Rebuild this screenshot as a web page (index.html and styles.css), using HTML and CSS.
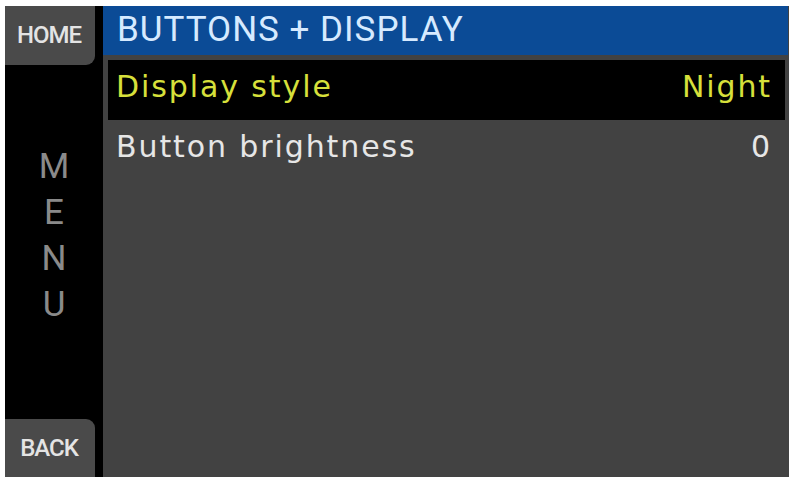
FILE: index.html
```html
<!DOCTYPE html>
<html>
<head>
<meta charset="utf-8">
<link rel="stylesheet" href="styles.css">
</head>
<body>
<div class="screen">
  <aside class="sidebar">
    <div class="tab tab-home">HOME</div>
    <div class="menu-label">
      <span>M</span><span>E</span><span>N</span><span>U</span>
    </div>
    <div class="tab tab-back">BACK</div>
  </aside>
  <main class="main">
    <header class="title">BUTTONS + DISPLAY</header>
    <div class="list">
      <div class="row selected"><span class="label">Display style</span><span class="value">Night</span></div>
      <div class="row"><span class="label">Button brightness</span><span class="value">0</span></div>
    </div>
  </main>
</div>
</body>
</html>
```

FILE: styles.css
```css
html, body {
  margin: 0;
  padding: 0;
  background: #ffffff;
}
body {
  padding: 6px 1px 1px 5px;
  font-family: Roboto, "DejaVu Sans", sans-serif;
}
.screen {
  display: flex;
  width: 784px;
  height: 471px;
  background: #000;
}
.sidebar {
  width: 98px;
  display: flex;
  flex-direction: column;
  background: #000;
}
.tab {
  width: 90px;
  background: #4a4a4a;
  color: #e4e4e4;
  font-size: 24px;
  font-weight: 500;
  letter-spacing: -1px;
  display: flex;
  align-items: center;
  justify-content: center;
  box-sizing: border-box;
  padding-right: 2px;
}
.tab-home {
  height: 59px;
  border-bottom-right-radius: 9px;
  padding-bottom: 2px;
}
.tab-back {
  height: 58px;
  border-top-right-radius: 9px;
}
.menu-label {
  flex: 1;
  display: flex;
  flex-direction: column;
  align-items: center;
  justify-content: center;
  color: #8a8a8a;
  font-size: 35px;
  font-weight: 400;
  line-height: 46px;
  padding-bottom: 12px;
  box-sizing: border-box;
}
.main {
  flex: 1;
  background: #424242;
  display: flex;
  flex-direction: column;
}
.title {
  height: 49px;
  background: #0b4b96;
  color: #d6eaff;
  font-size: 35px;
  line-height: 48px;
  padding-left: 14px;
  margin-right: 1px;
  letter-spacing: 1px;
}
.list {
  padding: 5px 4px 0 5px;
  display: flex;
  flex-direction: column;
}
.row {
  height: 60px;
  display: flex;
  align-items: center;
  justify-content: space-between;
  padding: 0 13px 7px 8px;
  box-sizing: border-box;
  color: #e6e6e6;
  font-family: "DejaVu Sans", sans-serif;
  font-size: 30px;
  letter-spacing: 1.9px;
}
.row.selected {
  background: #000;
  color: #d7e03b;
}
```
